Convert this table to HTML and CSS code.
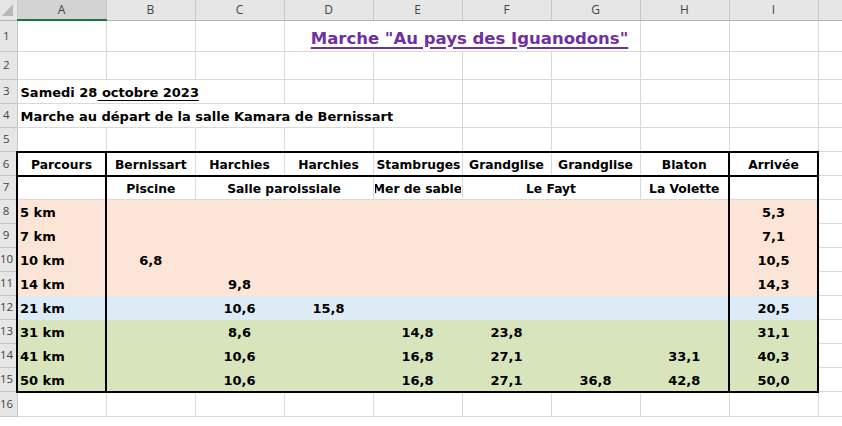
FILE: index.html
```html
<!DOCTYPE html>
<html lang="fr">
<head>
    <meta charset="utf-8"/>
    <title>Marche au pays des Iguanodons</title>
    <link rel="stylesheet" href="styles.css">
</head>
<body>
    <table class="sheet">
        <colgroup>
            <col class="col-rh">
            <col class="col-std" span="9">
            <col class="col-j">
        </colgroup>
        <tr class="hdr">
            <th class="corner"><svg width="17" height="19" viewBox="0 0 17 19"><polygon points="13,4 13,16 2,16" fill="#b7b7b7"/></svg></th>
            <th class="sel">A</th><th>B</th><th>C</th><th>D</th><th>E</th><th>F</th><th>G</th><th>H</th><th>I</th><th></th>
        </tr>
        <tr class="r1">
            <th>1</th><td></td><td></td><td></td>
            <td colspan="4" class="title">Marche "Au pays des Iguanodons"</td>
            <td></td><td></td><td></td>
        </tr>
        <tr class="r2">
            <th>2</th><td></td><td></td><td></td><td></td><td></td><td></td><td></td><td></td><td></td><td></td>
        </tr>
        <tr>
            <th>3</th>
            <td colspan="3" class="txt">Samedi 28<span class="ul"> octobre 2023</span></td>
            <td></td><td></td><td></td><td></td><td></td><td></td><td></td>
        </tr>
        <tr>
            <th>4</th>
            <td colspan="5" class="txt">Marche au départ de la salle Kamara de Bernissart</td>
            <td></td><td></td><td></td><td></td><td></td>
        </tr>
        <tr>
            <th>5</th><td></td><td></td><td></td><td></td><td></td><td></td><td></td><td></td><td></td><td></td>
        </tr>
        <tr class="head">
            <th>6</th>
            <td class="tt tl tr tb">Parcours</td>
            <td class="tt tb">Bernissart</td>
            <td class="tt tb">Harchies</td>
            <td class="tt tb">Harchies</td>
            <td class="tt tb">Stambruges</td>
            <td class="tt tb">Grandglise</td>
            <td class="tt tb">Grandglise</td>
            <td class="tt tb">Blaton</td>
            <td class="tt tb tl tr">Arrivée</td>
            <td class="j"></td>
        </tr>
        <tr class="head">
            <th>7</th>
            <td class="tl tr"></td>
            <td>Piscine</td>
            <td colspan="2">Salle paroissiale</td>
            <td><div class="clip">Mer de sable</div></td>
            <td colspan="2">Le Fayt</td>
            <td>La Volette</td>
            <td class="tl tr"></td>
            <td class="j"></td>
        </tr>
        <tr class="data peach">
            <th>8</th>
            <td class="km tl tr">5 km</td><td></td><td></td><td></td><td></td><td></td><td></td><td></td>
            <td class="tl tr">5,3</td><td class="j"></td>
        </tr>
        <tr class="data peach">
            <th>9</th>
            <td class="km tl tr">7 km</td><td></td><td></td><td></td><td></td><td></td><td></td><td></td>
            <td class="tl tr">7,1</td><td class="j"></td>
        </tr>
        <tr class="data peach">
            <th>10</th>
            <td class="km tl tr">10 km</td><td>6,8</td><td></td><td></td><td></td><td></td><td></td><td></td>
            <td class="tl tr">10,5</td><td class="j"></td>
        </tr>
        <tr class="data peach">
            <th>11</th>
            <td class="km tl tr">14 km</td><td></td><td>9,8</td><td></td><td></td><td></td><td></td><td></td>
            <td class="tl tr">14,3</td><td class="j"></td>
        </tr>
        <tr class="data blue">
            <th>12</th>
            <td class="km tl tr">21 km</td><td></td><td>10,6</td><td>15,8</td><td></td><td></td><td></td><td></td>
            <td class="tl tr">20,5</td><td class="j"></td>
        </tr>
        <tr class="data green">
            <th>13</th>
            <td class="km tl tr">31 km</td><td></td><td>8,6</td><td></td><td>14,8</td><td>23,8</td><td></td><td></td>
            <td class="tl tr">31,1</td><td class="j"></td>
        </tr>
        <tr class="data green">
            <th>14</th>
            <td class="km tl tr">41 km</td><td></td><td>10,6</td><td></td><td>16,8</td><td>27,1</td><td></td><td>33,1</td>
            <td class="tl tr">40,3</td><td class="j"></td>
        </tr>
        <tr class="data green">
            <th>15</th>
            <td class="km tl tr tb">50 km</td><td class="tb"></td><td class="tb">10,6</td><td class="tb"></td><td class="tb">16,8</td><td class="tb">27,1</td><td class="tb">36,8</td><td class="tb">42,8</td>
            <td class="tl tr tb">50,0</td><td class="j"></td>
        </tr>
        <tr>
            <th>16</th><td></td><td></td><td></td><td></td><td></td><td></td><td></td><td></td><td></td><td></td>
        </tr>
    </table>
</body>
</html>
```

FILE: styles.css
```css
body {
    margin: 0;
    background-color: #fff;
    overflow: hidden;
}
.sheet {
    border-collapse: collapse;
    table-layout: fixed;
    width: 842px;
    font-family: "DejaVu Sans", Verdana, sans-serif;
    font-weight: bold;
    font-size: 13px;
    color: #000;
}
.col-rh { width: 17px; }
.col-std { width: 89px; }
.col-j { width: 24px; }

/* column / row headers */
.sheet th {
    background-color: #e6e6e6;
    border: 1px solid #c8c8c8;
    font-family: "Open Sans", "Noto Sans", sans-serif;
    font-weight: normal;
    font-size: 12px;
    color: #444;
    padding: 0;
    line-height: 16px;
}
.hdr th {
    height: 19px;
    border-top: none;
    border-bottom: 1px solid #b4b4b4;
}
.hdr th.sel {
    background-color: #d3d3d3;
    border-bottom: 2px solid #217346;
}
.hdr th.corner {
    padding: 0;
    line-height: 0;
}
.sheet tr > th:first-child {
    text-align: center;
    padding-right: 4px;
    border-left: none;
    font-size: 11.5px;
}
.hdr th.corner { padding-right: 0; }

/* cells */
.sheet td {
    border: 1px solid #d9d9d9;
    height: 22px;
    padding: 0 3px 1px;
    vertical-align: bottom;
    text-align: center;
    white-space: nowrap;
    line-height: 18px;
}
.r1 td { height: 27px; }
.r2 td { height: 26px; }
.head td {
    height: 21px;
    font-size: 12.3px;
}

.title {
    color: #7030a0;
    font-size: 16.5px;
    padding-left: 18px !important;
    padding-bottom: 3px !important;
    text-decoration: underline;
    text-decoration-thickness: 2px;
    text-underline-offset: 3px;
}
.sheet td.txt {
    text-align: left;
    padding-left: 3px;
}
.ul {
    text-decoration: underline;
    text-decoration-thickness: 1px;
    text-underline-offset: 3px;
}
.clip {
    display: flex;
    justify-content: center;
    overflow: hidden;
    margin: 0 -2px;
}
.sheet td.km {
    text-align: left;
    padding-left: 2px;
}

/* fills hide gridlines */
.peach td { background-color: #fce4d6; border-color: #fce4d6; }
.blue td { background-color: #ddebf7; border-color: #ddebf7; }
.green td { background-color: #d8e4bc; border-color: #d8e4bc; }
.sheet td.j { background-color: #fff; border-color: #d9d9d9; }

/* table borders */
.sheet td.tt { border-top: 2px solid #000; }
.sheet td.tb { border-bottom: 2px solid #000; }
.sheet td.tl { border-left: 2px solid #000; }
.sheet td.tr { border-right: 2px solid #000; }
```
